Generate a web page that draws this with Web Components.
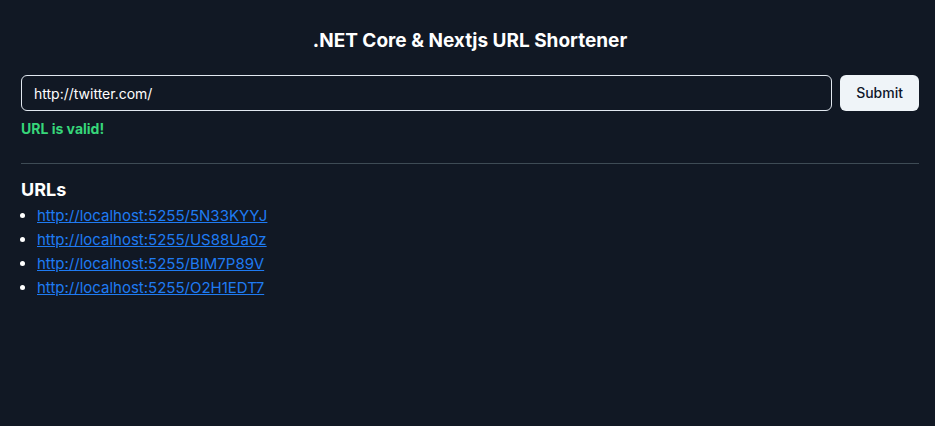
<!DOCTYPE html>
<html lang="en">
<head>
<meta charset="utf-8">
<title>URL Shortener</title>
<style>
  html { background: #111824; }
  body { margin: 0; color: #fff; font: 16px/24px Inter, "Liberation Sans", sans-serif; }
</style>
</head>
<body>
<url-shortener>
  <span slot="title">.NET Core &amp; Nextjs URL Shortener</span>
  <url-form slot="form" value="http://twitter.com/"><span>URL is valid!</span></url-form>
  <url-list slot="list" heading="URLs" base="http://localhost:5255/" codes="5N33KYYJ US88Ua0z BIM7P89V O2H1EDT7"></url-list>
</url-shortener>

<template id="shortener-template">
  <style>
    :host { display: block; padding: 27px 16px 16px 21px; }
    h1 { margin: 0 0 20px; text-align: center; font-size: 19px; line-height: 28px; font-weight: 700; }
    hr { margin: 24px 0 12px; border: 0; border-top: 1px solid #3e4b55; }
  </style>
  <main>
    <h1><slot name="title"></slot></h1>
    <slot name="form"></slot>
    <hr>
    <slot name="list"></slot>
  </main>
</template>

<template id="form-template">
  <style>
    :host { display: block; }
    form { display: flex; gap: 8px; }
    input, button { box-sizing: border-box; height: 36px; margin: 0; border-radius: 6px; font: inherit; font-size: 14px; line-height: 20px; }
    input { flex: 1; min-width: 0; padding: 0 12px; border: 1px solid #e2e8f0; background: transparent; color: #fff; outline: none; }
    button { padding: 0 16px; border: 0; background: #eff4f8; color: #0f172a; font-weight: 500; }
    p { margin: 8px 0 0; color: #37d67a; font-size: 14px; line-height: 20px; font-weight: 700; }
  </style>
  <form>
    <input type="text" aria-label="URL" aria-describedby="status">
    <button type="button">Submit</button>
  </form>
  <p id="status" role="status"><slot></slot></p>
</template>

<template id="list-template">
  <style>
    :host { display: block; }
    h2 { margin: 0; font-size: 18px; line-height: 28px; font-weight: 700; }
    ul { margin: 0; padding: 0 0 0 16px; font-size: 15px; line-height: 24px; list-style: disc; }
    a { color: #1f7bf2; text-decoration: underline; }
  </style>
  <h2></h2>
  <ul></ul>
</template>

<script>
  class TemplateElement extends HTMLElement {
    connectedCallback() {
      if (this.shadowRoot) return;
      const root = this.attachShadow({ mode: "open" });
      root.append(document.getElementById(this.constructor.template).content.cloneNode(true));
      this.render(root);
    }
    render() {}
  }

  class UrlShortener extends TemplateElement {
    static template = "shortener-template";
  }

  class UrlForm extends TemplateElement {
    static template = "form-template";
    render(root) {
      root.querySelector("input").value = this.getAttribute("value");
    }
  }

  class UrlList extends TemplateElement {
    static template = "list-template";
    render(root) {
      root.querySelector("h2").textContent = this.getAttribute("heading");
      const list = root.querySelector("ul");
      for (const code of this.getAttribute("codes").split(" ")) {
        const item = document.createElement("li");
        const link = document.createElement("a");
        link.href = link.textContent = this.getAttribute("base") + code;
        item.append(link);
        list.append(item);
      }
    }
  }

  customElements.define("url-shortener", UrlShortener);
  customElements.define("url-form", UrlForm);
  customElements.define("url-list", UrlList);
</script>
</body>
</html>
